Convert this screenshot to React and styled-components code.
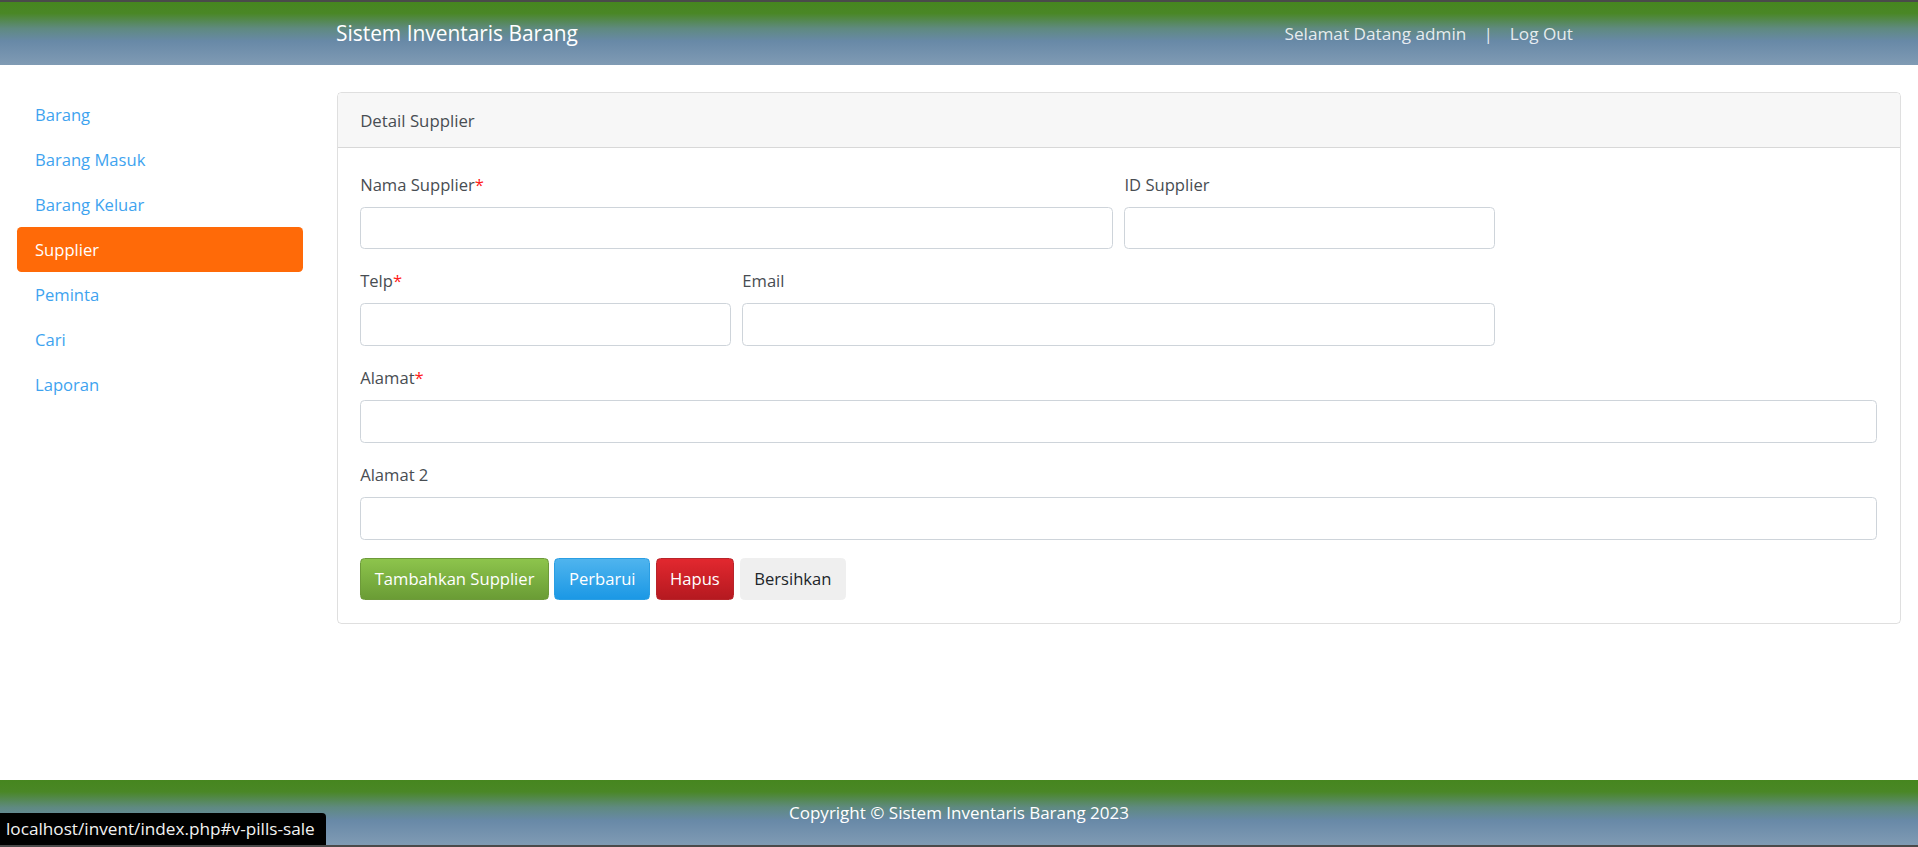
import React from "react";
import styled, { createGlobalStyle, css } from "styled-components";

const GlobalStyle = createGlobalStyle`
  * {
    box-sizing: border-box;
  }
  body {
    margin: 0;
    font-family: "Open Sans", "Noto Sans", sans-serif;
    font-size: 16.6px;
    color: #212529;
    background: #fff;
  }
`;

const barGradient = css`
  background: linear-gradient(
    to bottom,
    #46861f 0%,
    #4a8726 18%,
    #5f8a80 42%,
    #6889a7 62%,
    #809bb4 100%
  );
`;

const Page = styled.div`
  min-height: 100vh;
  display: flex;
  flex-direction: column;
`;

const Navbar = styled.nav`
  ${barGradient};
  height: 65px;
  border-top: 2px solid #4a4a4a;
`;

const NavContainer = styled.div`
  width: 1246px;
  height: 100%;
  margin: 0 auto;
  display: flex;
  align-items: center;
  justify-content: space-between;
`;

const Brand = styled.a`
  color: #fff;
  font-size: 20.9px;
  line-height: 34px;
  text-decoration: none;
  padding-bottom: 1px;
`;

const NavRight = styled.div`
  display: flex;
  align-items: center;
  color: rgba(255, 255, 255, 0.85);
  font-size: 17.2px;
  line-height: 27px;
`;

const NavItem = styled.a`
  padding: 0 9px;
  color: inherit;
  text-decoration: none;
`;

const Divider = styled.span`
  padding: 0 8px;
`;

const Main = styled.main`
  flex: 1;
  display: grid;
  grid-template-columns: 2fr 10fr;
  align-items: start;
  padding-top: 27px;
`;

const Sidebar = styled.aside`
  padding: 0 17px;
  display: flex;
  flex-direction: column;
`;

const SideLink = styled.a`
  display: block;
  padding: 9px 18px;
  line-height: 27px;
  font-size: 16.6px;
  border-radius: 4.5px;
  text-decoration: none;
  color: ${(p) => (p.$active ? "#fff" : "#3ea3ef")};
  background: ${(p) => (p.$active ? "#ff6a08" : "transparent")};
`;

const Content = styled.section`
  padding: 0 17px;
`;

const Card = styled.div`
  border: 1px solid rgba(0, 0, 0, 0.125);
  border-radius: 4.5px;
  overflow: hidden;
`;

const CardHeader = styled.div`
  padding: 13.5px 22.5px;
  line-height: 27px;
  font-size: 16.8px;
  background: #f7f7f7;
  border-bottom: 1px solid rgba(0, 0, 0, 0.125);
  color: #484d52;
`;

const CardBody = styled.div`
  padding: 22.5px;
`;

const FormRow = styled.div`
  display: grid;
  grid-template-columns: repeat(12, 1fr);
  column-gap: 11.25px;
`;

const Field = styled.div`
  grid-column: span ${(p) => p.$span};
  margin-bottom: 18px;
`;

const Label = styled.label`
  display: block;
  line-height: 27px;
  margin-bottom: 9px;
  color: #484d52;
`;

const Required = styled.span`
  color: #ff1a1a;
`;

const Input = styled.input`
  display: block;
  width: 100%;
  height: 42.75px;
  padding: 6.75px 13.5px;
  font: inherit;
  color: #495057;
  border: 1px solid #ced4da;
  border-radius: 4.5px;
  background: #fff;
`;

const variants = {
  success: css`
    color: #fff;
    background: linear-gradient(to bottom, #8dc44c, #6a9c35);
    border-color: #6d9a3a;
  `,
  info: css`
    color: #fff;
    background: linear-gradient(to bottom, #4fb4ee, #1b98e5);
    border-color: #2a9ee3;
  `,
  danger: css`
    color: #fff;
    background: linear-gradient(to bottom, #e2282f, #b51920);
    border-color: #b8242a;
  `,
  light: css`
    color: #212529;
    background: #efefef;
    border-color: #efefef;
  `,
};

const ButtonBar = styled.div`
  display: flex;
  gap: 5.5px;
`;

const Button = styled.button`
  font: inherit;
  line-height: 27px;
  padding: 6.75px 13.5px;
  border: 1px solid transparent;
  border-radius: 4.5px;
  cursor: pointer;
  ${(p) => variants[p.$variant]};
`;

const Footer = styled.footer`
  ${barGradient};
  height: 67px;
  border-bottom: 2px solid #4a4a4a;
  display: flex;
  align-items: center;
  justify-content: center;
  color: #fff;
  font-size: 17px;
`;

const StatusBubble = styled.div`
  position: fixed;
  left: 0;
  bottom: 2px;
  width: 326px;
  height: 32px;
  padding: 0 6px;
  background: #000;
  color: #f2f2f2;
  font-size: 17.2px;
  line-height: 32px;
  border-top-right-radius: 4px;
  white-space: nowrap;
  overflow: hidden;
`;

const menu = [
  "Barang",
  "Barang Masuk",
  "Barang Keluar",
  "Supplier",
  "Peminta",
  "Cari",
  "Laporan",
];

const FormField = ({ span, label, required }) => (
  <Field $span={span}>
    <Label>
      {label}
      {required && <Required>*</Required>}
    </Label>
    <Input type="text" />
  </Field>
);

export default function App() {
  return (
    <Page>
      <GlobalStyle />
      <Navbar>
        <NavContainer>
          <Brand href="#">Sistem Inventaris Barang</Brand>
          <NavRight>
            <NavItem>Selamat Datang admin</NavItem>
            <Divider>|</Divider>
            <NavItem href="#">Log Out</NavItem>
          </NavRight>
        </NavContainer>
      </Navbar>

      <Main>
        <Sidebar>
          {menu.map((item) => (
            <SideLink key={item} href="#" $active={item === "Supplier"}>
              {item}
            </SideLink>
          ))}
        </Sidebar>

        <Content>
          <Card>
            <CardHeader>Detail Supplier</CardHeader>
            <CardBody>
              <FormRow>
                <FormField span={6} label="Nama Supplier" required />
                <FormField span={3} label="ID Supplier" />
              </FormRow>
              <FormRow>
                <FormField span={3} label="Telp" required />
                <FormField span={6} label="Email" />
              </FormRow>
              <FormRow>
                <FormField span={12} label="Alamat" required />
              </FormRow>
              <FormRow>
                <FormField span={12} label="Alamat 2" />
              </FormRow>
              <ButtonBar>
                <Button $variant="success">Tambahkan Supplier</Button>
                <Button $variant="info">Perbarui</Button>
                <Button $variant="danger">Hapus</Button>
                <Button $variant="light">Bersihkan</Button>
              </ButtonBar>
            </CardBody>
          </Card>
        </Content>
      </Main>

      <Footer>Copyright © Sistem Inventaris Barang 2023</Footer>
      <StatusBubble>localhost/invent/index.php#v-pills-sale</StatusBubble>
    </Page>
  );
}
